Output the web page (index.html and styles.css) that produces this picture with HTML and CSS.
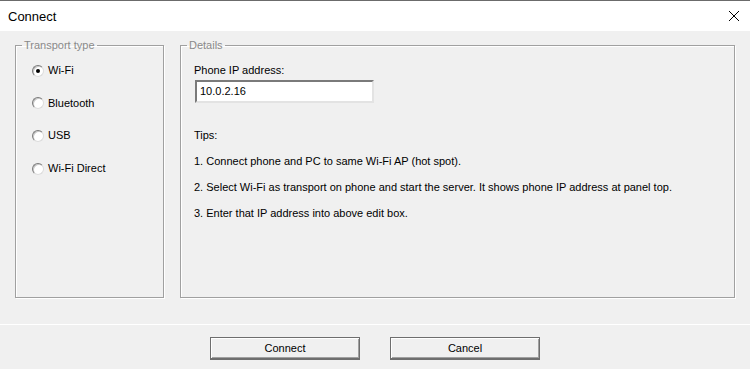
FILE: index.html
```html
<!DOCTYPE html>
<html lang="en">
<head>
  <meta charset="UTF-8">
  <title>Connect</title>
  <link rel="stylesheet" href="styles.css">
</head>
<body>
  <div class="window">
    <div class="titlebar">
      <span class="title">Connect</span>
      <svg class="close" width="12" height="12" viewBox="0 0 12 12">
        <path d="M1 1 L11 11 M11 1 L1 11" stroke="#000" stroke-width="1" fill="none"/>
      </svg>
    </div>

    <div class="main">
      <fieldset class="group transport">
        <legend>Transport type</legend>
        <div class="radios">
          <label class="radio"><span class="dot checked"></span>Wi-Fi</label>
          <label class="radio"><span class="dot"></span>Bluetooth</label>
          <label class="radio"><span class="dot"></span>USB</label>
          <label class="radio"><span class="dot"></span>Wi-Fi Direct</label>
        </div>
      </fieldset>

      <fieldset class="group details">
        <legend>Details</legend>
        <div class="details-body">
          <div class="line">Phone IP address:</div>
          <div class="edit">10.0.2.16</div>
          <div class="tips">
            <div class="line">Tips:</div>
            <div class="line">1. Connect phone and PC to same Wi-Fi AP (hot spot).</div>
            <div class="line">2. Select Wi-Fi as transport on phone and start the server. It shows phone IP address at panel top.</div>
            <div class="line">3. Enter that IP address into above edit box.</div>
          </div>
        </div>
      </fieldset>
    </div>

    <div class="footer">
      <button class="btn">Connect</button>
      <button class="btn">Cancel</button>
    </div>
  </div>
</body>
</html>
```

FILE: styles.css
```css
* {
  margin: 0;
  padding: 0;
  box-sizing: border-box;
}
body {
  background: #f0f0f0;
  font-family: 'Liberation Sans', Arial, sans-serif;
  font-size: 11px;
  color: #000;
}
.window {
  width: 750px;
  height: 369px;
  display: flex;
  flex-direction: column;
  overflow: hidden;
}
.titlebar {
  height: 31px;
  background: #fff;
  border-top: 1px solid #6b6b6b;
  display: flex;
  align-items: center;
  justify-content: space-between;
  padding: 0 10px 0 8px;
}
.title {
  font-size: 13px;
}
.close {
  display: block;
}
.main {
  height: 293px;
  display: flex;
  gap: 16px;
  padding: 8px 15px 26px 15px;
}
.group {
  border: 1px solid #a0a0a0;
  box-shadow: 1px 1px 0 #fff, inset 1px 1px 0 #fff;
  padding: 0 6px;
  min-width: 0;
}
.group legend {
  color: #8a8a8a;
  padding: 0 2px;
  line-height: 13px;
}
.transport {
  width: 149px;
}
.details {
  flex: 1;
}
.radios {
  display: flex;
  flex-direction: column;
  gap: 19.7px;
  padding: 12px 0 0 10px;
}
.radio {
  display: flex;
  align-items: center;
  gap: 4px;
  line-height: 13px;
  height: 13px;
}
.dot {
  width: 12px;
  height: 12px;
  border-radius: 50%;
  background: #fff;
  border: 1px solid;
  border-color: #7a7a7a #dcdcdc #dcdcdc #7a7a7a;
  box-shadow: inset 1px 1px 0 #c8c8c8;
  display: flex;
  align-items: center;
  justify-content: center;
}
.dot.checked::after {
  content: '';
  width: 4px;
  height: 4px;
  border-radius: 50%;
  background: #000;
}
.details-body {
  padding: 12px 0 0 7px;
}
.line {
  line-height: 13px;
}
.edit {
  margin: 3px 0 0 1px;
  width: 179px;
  height: 23px;
  background: #fff;
  border: 2px solid;
  border-color: #7a7a7a #e3e3e3 #e3e3e3 #7a7a7a;
  padding: 3px 0 0 3px;
  line-height: 13px;
}
.tips {
  margin-top: 26px;
  display: flex;
  flex-direction: column;
  gap: 13px;
}
.footer {
  flex: 1;
  border-top: 1px solid #fff;
  display: flex;
  justify-content: center;
  gap: 30px;
  padding-top: 12px;
}
.btn {
  width: 150px;
  height: 23px;
  font: inherit;
  color: #000;
  background: #f0f0f0;
  border: 1px solid #6e6e6e;
  border-bottom-width: 2px;
  box-shadow: inset 1px 1px 0 #fff, inset -1px -1px 0 #a0a0a0;
}
```
